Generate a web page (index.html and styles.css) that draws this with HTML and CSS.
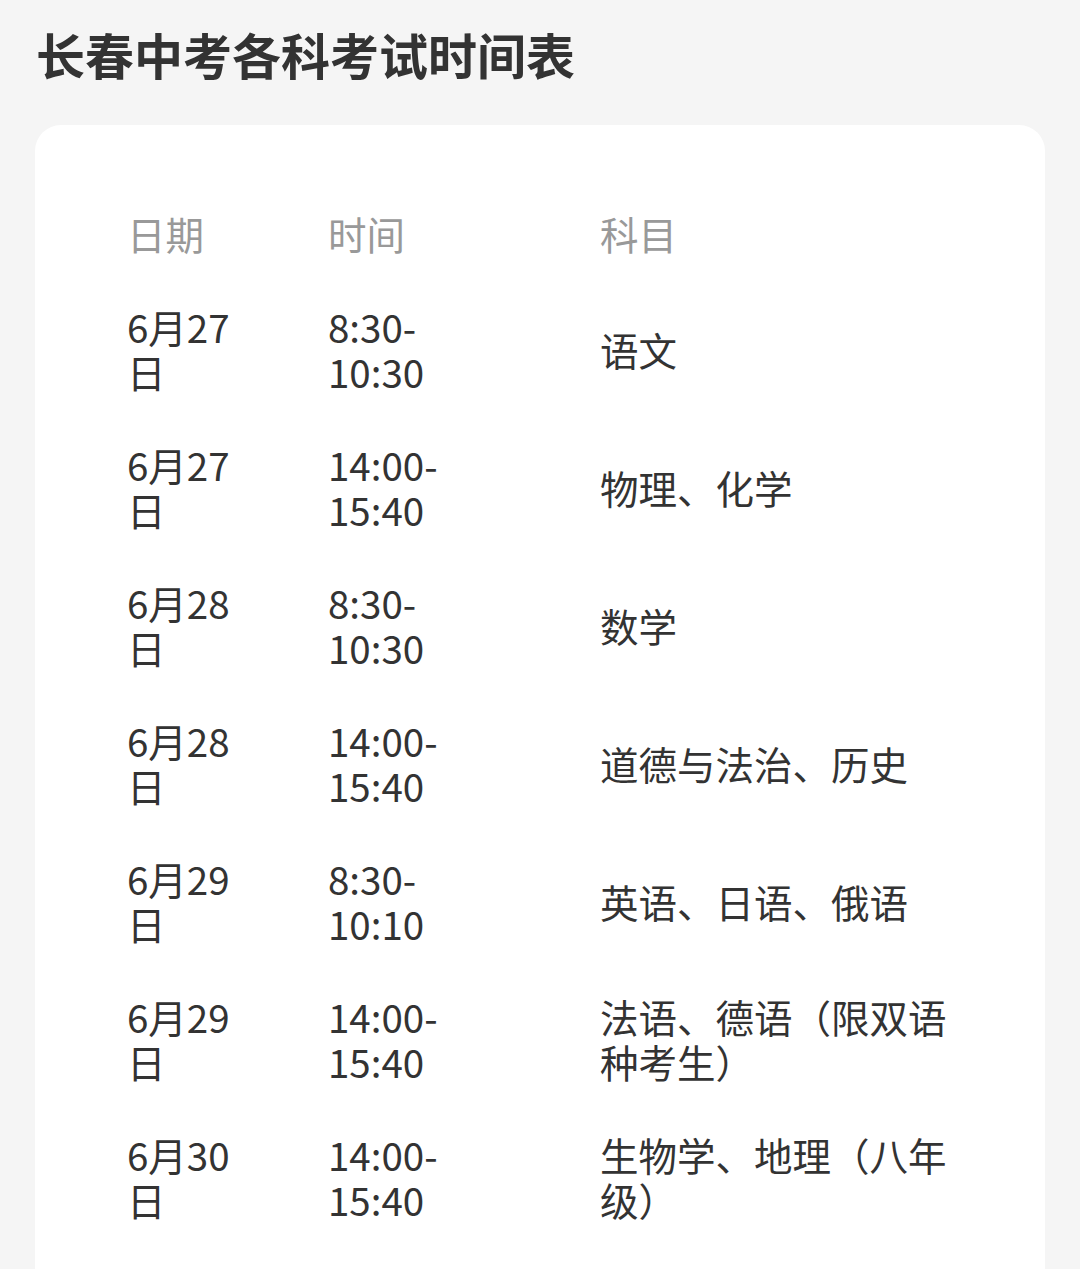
FILE: index.html
```html
<!DOCTYPE html>
<html lang="zh">
<head>
<meta charset="utf-8">
<title>长春中考各科考试时间表</title>
<link rel="stylesheet" href="styles.css">
</head>
<body>
<h1 class="title">长春中考各科考试时间表</h1>
<div class="card">
  <div class="table">
    <div class="row head">
      <div class="cell c-date">日期</div>
      <div class="cell c-time">时间</div>
      <div class="cell c-subj">科目</div>
    </div>
    <div class="row">
      <div class="cell c-date">6月27日</div>
      <div class="cell c-time">8:30-10:30</div>
      <div class="cell c-subj">语文</div>
    </div>
    <div class="row">
      <div class="cell c-date">6月27日</div>
      <div class="cell c-time">14:00-15:40</div>
      <div class="cell c-subj">物理、化学</div>
    </div>
    <div class="row">
      <div class="cell c-date">6月28日</div>
      <div class="cell c-time">8:30-10:30</div>
      <div class="cell c-subj">数学</div>
    </div>
    <div class="row">
      <div class="cell c-date">6月28日</div>
      <div class="cell c-time">14:00-15:40</div>
      <div class="cell c-subj">道德与法治、历史</div>
    </div>
    <div class="row">
      <div class="cell c-date">6月29日</div>
      <div class="cell c-time">8:30-10:10</div>
      <div class="cell c-subj">英语、日语、俄语</div>
    </div>
    <div class="row">
      <div class="cell c-date">6月29日</div>
      <div class="cell c-time">14:00-15:40</div>
      <div class="cell c-subj">法语、德语（限双语种考生）</div>
    </div>
    <div class="row">
      <div class="cell c-date">6月30日</div>
      <div class="cell c-time">14:00-15:40</div>
      <div class="cell c-subj">生物学、地理（八年级）</div>
    </div>
  </div>
</div>
</body>
</html>
```

FILE: styles.css
```css
html, body {
  margin: 0;
  padding: 0;
  background: #f5f5f5;
}
body {
  font-family: "Noto Sans CJK SC", "Noto Sans", sans-serif;
  color: #333333;
}
.title {
  margin: 0;
  padding: 25px 0 0 36px;
  font-size: 49px;
  line-height: 58px;
  font-weight: 700;
  color: #333333;
}
.card {
  margin: 42px 0 0 35px;
  width: 1010px;
  background: #ffffff;
  border-radius: 26px;
  padding: 62px 0 60px 92px;
  box-sizing: border-box;
}
.table {
  display: flex;
  flex-direction: column;
}
.row {
  display: flex;
  align-items: center;
}
.cell {
  padding: 24px 0;
  font-size: 38.5px;
  line-height: 45px;
  box-sizing: border-box;
}
.c-date {
  width: 201px;
  padding-right: 76px;
}
.c-time {
  width: 272px;
  padding-right: 100px;
}
.c-subj {
  width: 362px;
}
.head .cell {
  color: #999999;
}
```
